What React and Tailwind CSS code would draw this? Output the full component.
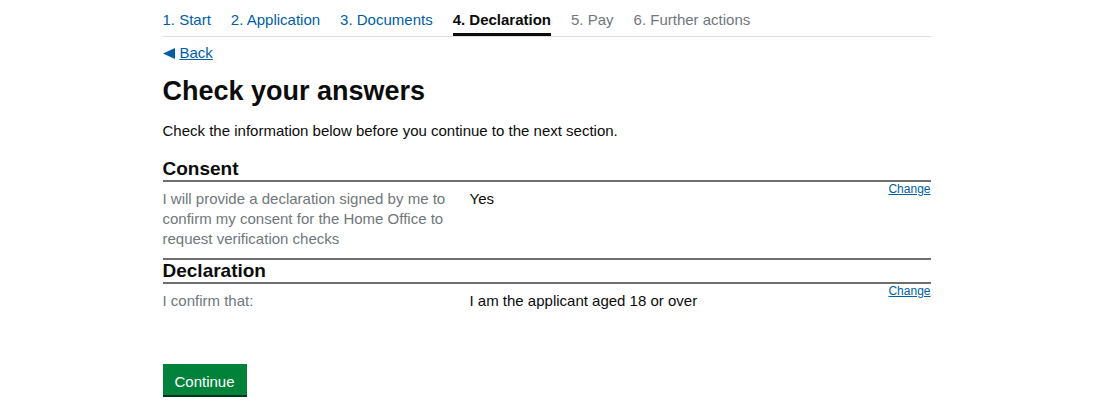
import React from "react";

const steps = [
  { label: "1. Start", state: "done" },
  { label: "2. Application", state: "done" },
  { label: "3. Documents", state: "done" },
  { label: "4. Declaration", state: "current" },
  { label: "5. Pay", state: "todo" },
  { label: "6. Further actions", state: "todo" },
];

function SummaryRow({ label, value, bottom }) {
  return (
    <div className={"flex items-start " + bottom}>
      <div className="w-[307px] pt-[7px] pr-6 text-[15px] leading-[20px] text-[#6f777b]">
        {label}
      </div>
      <div className="flex-1 pt-[7px] text-[15px] leading-[20px] text-[#0b0c0c]">
        {value}
      </div>
      <a
        href="#"
        className="text-[12px] leading-[14px] text-[#005ea5] underline"
      >
        Change
      </a>
    </div>
  );
}

export default function App() {
  return (
    <div className="min-h-screen bg-white font-['Liberation_Sans',Arial,sans-serif]">
      <div className="mx-auto w-[768px]">
        <nav className="flex gap-5 border-b border-[#dedede] pt-[10px]">
          {steps.map((s) => (
            <div
              key={s.label}
              className={
                s.state === "current"
                  ? "border-b-[3px] border-[#0b0c0c] pb-[3px] text-[15px] font-bold leading-[20px] text-[#0b0c0c]"
                  : s.state === "done"
                  ? "pb-[6px] text-[15px] leading-[20px] text-[#005ea5]"
                  : "pb-[6px] text-[15px] leading-[20px] text-[#6f777b]"
              }
            >
              {s.label}
            </div>
          ))}
        </nav>

        <a
          href="#"
          className="mt-[6px] inline-flex items-center gap-[5px] text-[15px] leading-[20px] text-[#005ea5]"
        >
          <svg width="12" height="11" viewBox="0 0 12 11" className="fill-current">
            <polygon points="0,5.5 12,0 12,11" />
          </svg>
          <span className="underline">Back</span>
        </a>

        <h1 className="mt-[9px] text-[27px] font-bold leading-[32px] text-[#0b0c0c]">
          Check your answers
        </h1>

        <p className="mt-[14px] text-[15px] leading-[20px] text-[#0b0c0c]">
          Check the information below before you continue to the next section.
        </p>

        <h2 className="mt-[17px] border-b-2 border-[#6f6f6f] text-[19px] font-bold leading-[22px] text-[#0b0c0c]">
          Consent
        </h2>
        <div className="border-b-2 border-[#6f6f6f]">
          <SummaryRow
            label="I will provide a declaration signed by me to confirm my consent for the Home Office to request verification checks"
            value="Yes"
            bottom="pb-[9px]"
          />
        </div>

        <h2 className="border-b-2 border-[#6f6f6f] text-[19px] font-bold leading-[22px] text-[#0b0c0c]">
          Declaration
        </h2>
        <SummaryRow
          label="I confirm that:"
          value="I am the applicant aged 18 or over"
          bottom="pb-0"
        />

        <button className="mt-[53px] bg-[#00823b] px-[12px] pt-[8px] pb-[4px] text-[15px] leading-[19px] text-white shadow-[0_2px_0_#003618]">
          Continue
        </button>
      </div>
    </div>
  );
}
